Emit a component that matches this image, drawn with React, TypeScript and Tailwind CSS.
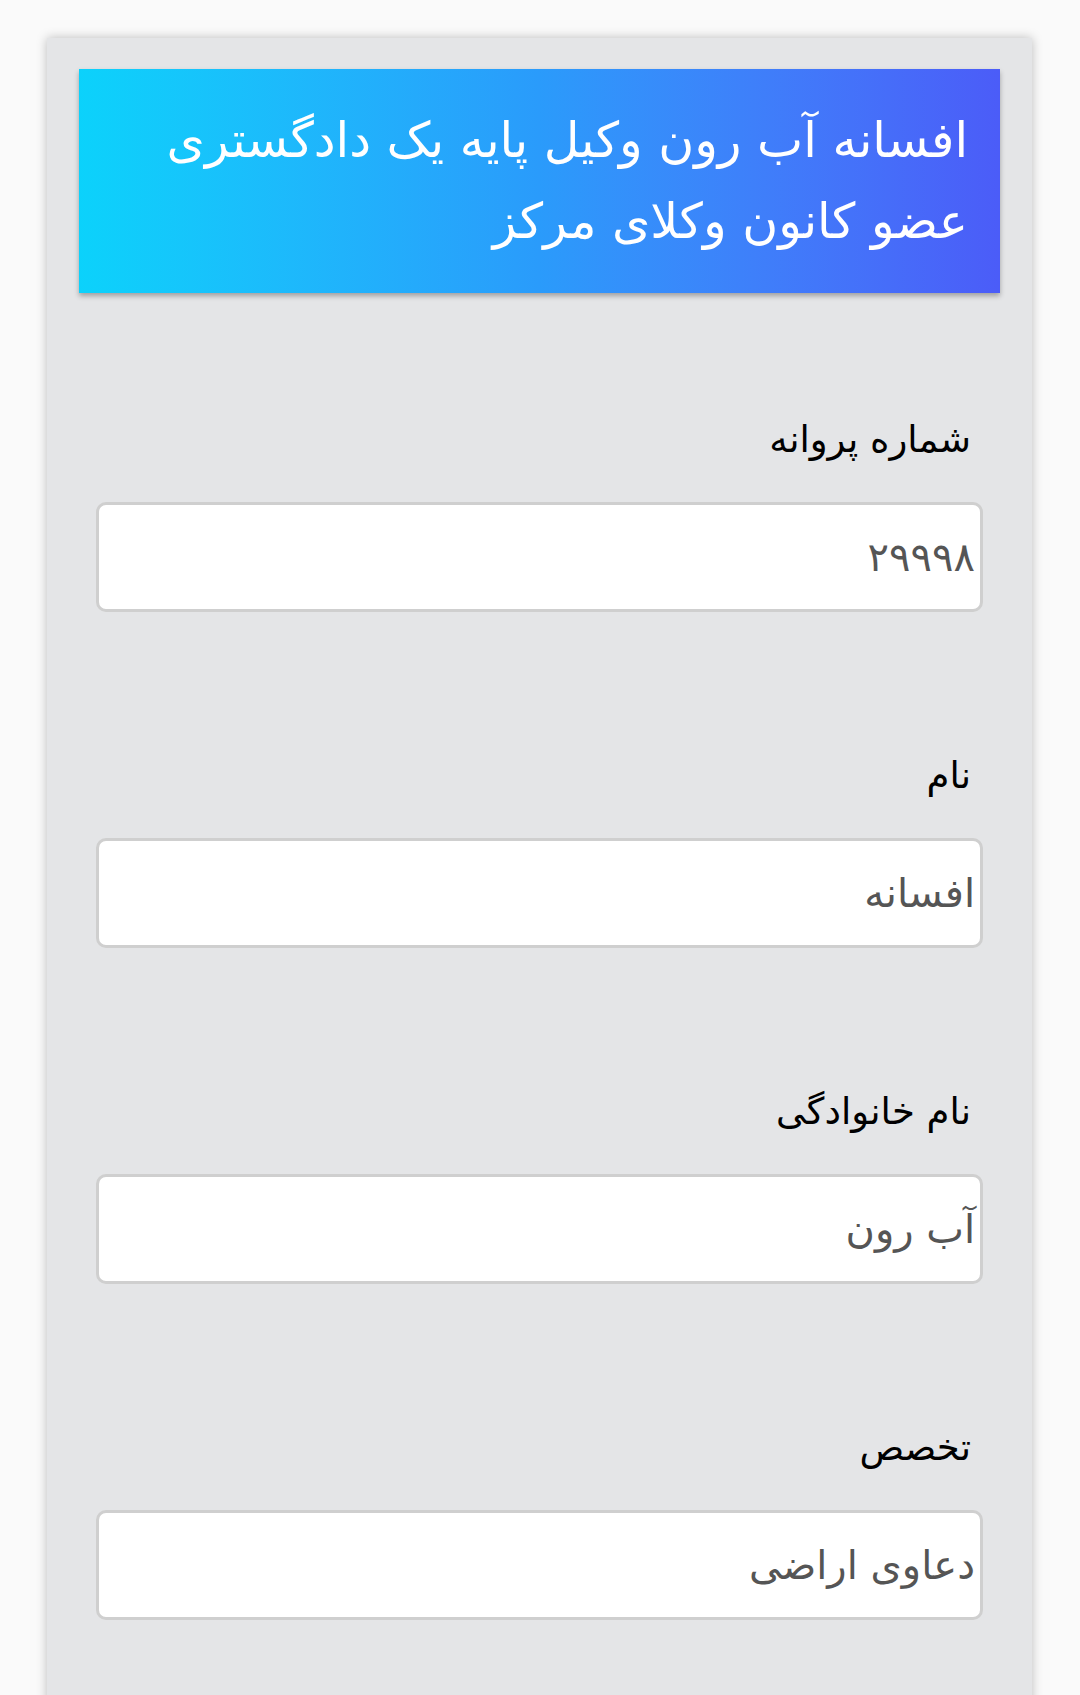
const fields = [
  { label: "شماره پروانه", value: "۲۹۹۹۸" },
  { label: "نام", value: "افسانه" },
  { label: "نام خانوادگی", value: "آب رون" },
  { label: "تخصص", value: "دعاوی اراضی" },
];

function Field({ label, value }: { label: string; value: string }) {
  return (
    <div className="flex flex-col mb-[134px]">
      <label className="h-[60px] leading-[60px] pr-[12px] text-[37px] text-black">
        {label}
      </label>
      <div className="mt-[32px] h-[110px] flex items-center pr-[5px] bg-white border-[3px] border-[#cfcfcf] rounded-[10px]">
        <span className="text-[40px] text-[#555]">{value}</span>
      </div>
    </div>
  );
}

export default function App() {
  return (
    <div
      className="h-[1695px] bg-[#fafafa] pt-[38px] overflow-hidden"
      style={{ fontFamily: '"DejaVu Sans", "Noto Sans", sans-serif' }}
    >
      <div
        dir="rtl"
        className="ml-[47px] mr-[48px] bg-[#e4e5e7] shadow-[0_0_10px_rgba(0,0,0,0.25)] pt-[31px] pb-[40px]"
      >
        <div className="mx-[32px] h-[224px] flex items-center pr-[32px] pl-[20px] bg-gradient-to-l from-[#4b5cf8] via-[#2a9bfb] to-[#0bd2fb] shadow-[0_3px_5px_rgba(0,0,0,0.3)]">
          <h1 className="text-white text-[49px] leading-[81px] font-normal">
            افسانه آب رون وکیل پایه یک دادگستری
            <br />
            عضو کانون وکلای مرکز
          </h1>
        </div>
        <div className="mt-[117px] pr-[49px] pl-[49px]">
          {fields.map((f) => (
            <Field key={f.label} label={f.label} value={f.value} />
          ))}
        </div>
      </div>
    </div>
  );
}
